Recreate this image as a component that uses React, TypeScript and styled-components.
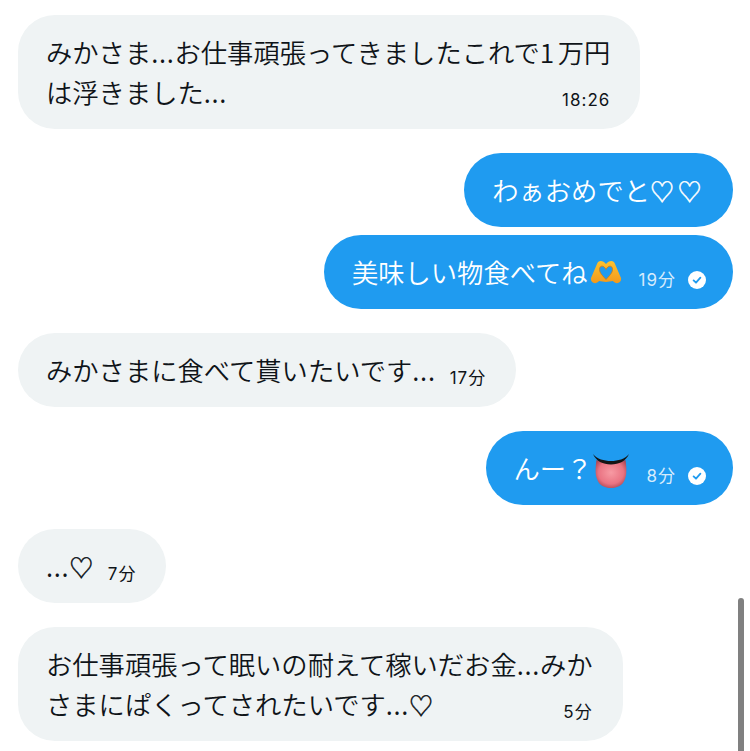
import styled, { createGlobalStyle } from 'styled-components';
import { ReactNode } from 'react';

const GlobalStyle = createGlobalStyle`
	html,
	body {
		background: #fff;
		height: 100%;
		margin: 0;
		overflow: hidden;
	}
`;

const Thread = styled.div`
	box-sizing: border-box;
	display: flex;
	flex-direction: column;
	font-family: 'Noto Sans CJK JP', 'Noto Sans', sans-serif;
	height: 751px;
	overflow: hidden;
	padding: 15px 17px 0 18px;
	position: relative;
`;

const Row = styled.div<{ $mine?: boolean; $grouped?: boolean }>`
	display: flex;
	justify-content: ${(p) => (p.$mine ? 'flex-end' : 'flex-start')};
	margin-top: ${(p) => (p.$grouped ? '8px' : '24px')};

	&:first-of-type {
		margin-top: 0;
	}
`;

const Bubble = styled.div<{ $mine?: boolean }>`
	background: ${(p) => (p.$mine ? '#1f9bf0' : '#eff3f4')};
	border-radius: 37px;
	color: ${(p) => (p.$mine ? '#fff' : '#0f1419')};
	font-size: 26.3px;
	font-weight: 350;
	line-height: 40px;
	padding: 17px 30px 17px 28px;
	white-space: nowrap;
`;

const Meta = styled.span<{ $mine?: boolean; $gap: number }>`
	align-items: center;
	color: ${(p) => (p.$mine ? 'rgba(255, 255, 255, 0.82)' : '#0f1419')};
	display: flex;
	float: right;
	font-family: 'Inter', 'Noto Sans CJK JP', sans-serif;
	font-size: 17px;
	font-weight: 400;
	gap: 12px;
	letter-spacing: 1px;
	line-height: 20px;
	margin: 18px 0 0 ${(p) => p.$gap}px;
`;

const Check = styled.svg`
	display: block;
	height: 18px;
	margin-right: -3px;
	width: 18px;
`;

const Heart = styled.span<{ $after?: number }>`
	-webkit-text-stroke: 0.5px currentColor;
	font-size: 24px;
	letter-spacing: 3.5px;
	line-height: 1;
	margin-right: ${(p) => p.$after ?? 0}px;
`;

// "..." and digits sit wider in the original font
const Tracked = styled.span<{ $tracking: number }>`
	letter-spacing: ${(p) => p.$tracking}px;
`;

const Emoji = styled.svg<{ $width: number; $height: number; $drop: number; $before: number; $after: number }>`
	display: inline-block;
	height: ${(p) => p.$height}px;
	margin: -12px ${(p) => p.$after}px -12px ${(p) => p.$before}px;
	vertical-align: ${(p) => p.$drop}px;
	width: ${(p) => p.$width}px;
`;

const Scrollbar = styled.div`
	background: #808080;
	border-radius: 3px 3px 0 0;
	bottom: 0;
	position: absolute;
	right: 6px;
	top: 598px;
	width: 6px;
`;

const Dots = () => <Tracked $tracking={0.7}>...</Tracked>;

const ReadMark = () => (
	<Check viewBox="0 0 18 18">
		<circle cx="9" cy="9" r="9" fill="#fff" />
		<path d="M5.6 9.4l2.4 2.3 4.4-5" fill="none" stroke="#1f9bf0" strokeWidth="1.8" strokeLinecap="round" strokeLinejoin="round" />
	</Check>
);

const HeartHands = () => (
	<Emoji $width={32} $height={24} $drop={11} $before={2} $after={1} viewBox="0 0 32 24">
		<defs>
			<linearGradient id="hand" x1="0" y1="0" x2="0" y2="1">
				<stop offset="0" stopColor="#fdc22f" />
				<stop offset="1" stopColor="#f2991c" />
			</linearGradient>
		</defs>
		<path
			d="M16 4C13 0 8 0 7 4L1 18c-1 5 5 7 8 3l7 1 7-1c3 4 9 2 8-3L25 4C24 0 19 0 16 4z"
			fill="url(#hand)"
		/>
		<path
			d="M16 9.500C14 5 9.500 5 9.500 9.500 9.500 13 13 16 16 19.500 19 16 22.500 13 22.500 9.500 22.500 5 18 5 16 9.500z"
			fill="#1f9bf0"
			stroke="#c9791a"
			strokeWidth="0.8"
		/>
	</Emoji>
);

const Tongue = () => (
	<Emoji $width={36} $height={36} $drop={2} $before={1} $after={1} viewBox="0 0 36 36">
		<defs>
			<radialGradient id="tongue" cx="0.5" cy="0.45" r="0.62">
				<stop offset="0" stopColor="#f79aa3" />
				<stop offset="0.65" stopColor="#ea7483" />
				<stop offset="1" stopColor="#a8434f" />
			</radialGradient>
		</defs>
		<path
			d="M3.500 7c8.500 4 20.500 4 29 0 1 7 1.500 14-.5 19-2 6.500-8 9-14 9s-12-2.500-14-9C2 21 2.500 14 3.500 7z"
			fill="url(#tongue)"
		/>
		<path d="M0 1c4 5 11 7 18 7s14-2 18-7c-3 7-10 10.500-18 10.500S3 8 0 1z" fill="#141414" />
	</Emoji>
);

type MessageProps = {
	mine?: boolean;
	grouped?: boolean;
	time?: string;
	read?: boolean;
	metaGap?: number;
	children: ReactNode;
};

const Message = ({ mine, grouped, time, read, metaGap = 16, children }: MessageProps) => (
	<Row $mine={mine} $grouped={grouped}>
		<Bubble $mine={mine}>
			{children}
			{time && (
				<Meta $mine={mine} $gap={metaGap}>
					{time}
					{read && <ReadMark />}
				</Meta>
			)}
		</Bubble>
	</Row>
);

export default function App() {
	return (
		<>
			<GlobalStyle />
			<Thread>
				<Message time="18:26">
					みかさま<Dots />お仕事頑張ってきましたこれで<Tracked $tracking={3.5}>1</Tracked>万円
					<br />
					は浮きました<Dots />
				</Message>
				<Message mine>
					わぁおめでと<Heart $after={-2}>♡♡</Heart>
				</Message>
				<Message mine grouped time="19分" read>
					美味しい物食べてね
					<HeartHands />
				</Message>
				<Message time="17分" metaGap={14}>
					みかさまに食べて貰いたいです<Dots />
				</Message>
				<Message mine time="8分" read>
					んー？
					<Tongue />
				</Message>
				<Message time="7分">
					<Dots />
					<Heart $after={-5}>♡</Heart>
				</Message>
				<Message time="5分">
					お仕事頑張って眠いの耐えて稼いだお金<Dots />みか
					<br />
					さまにぱくってされたいです<Dots />
					<Heart>♡</Heart>
				</Message>
				<Scrollbar />
			</Thread>
		</>
	);
}
